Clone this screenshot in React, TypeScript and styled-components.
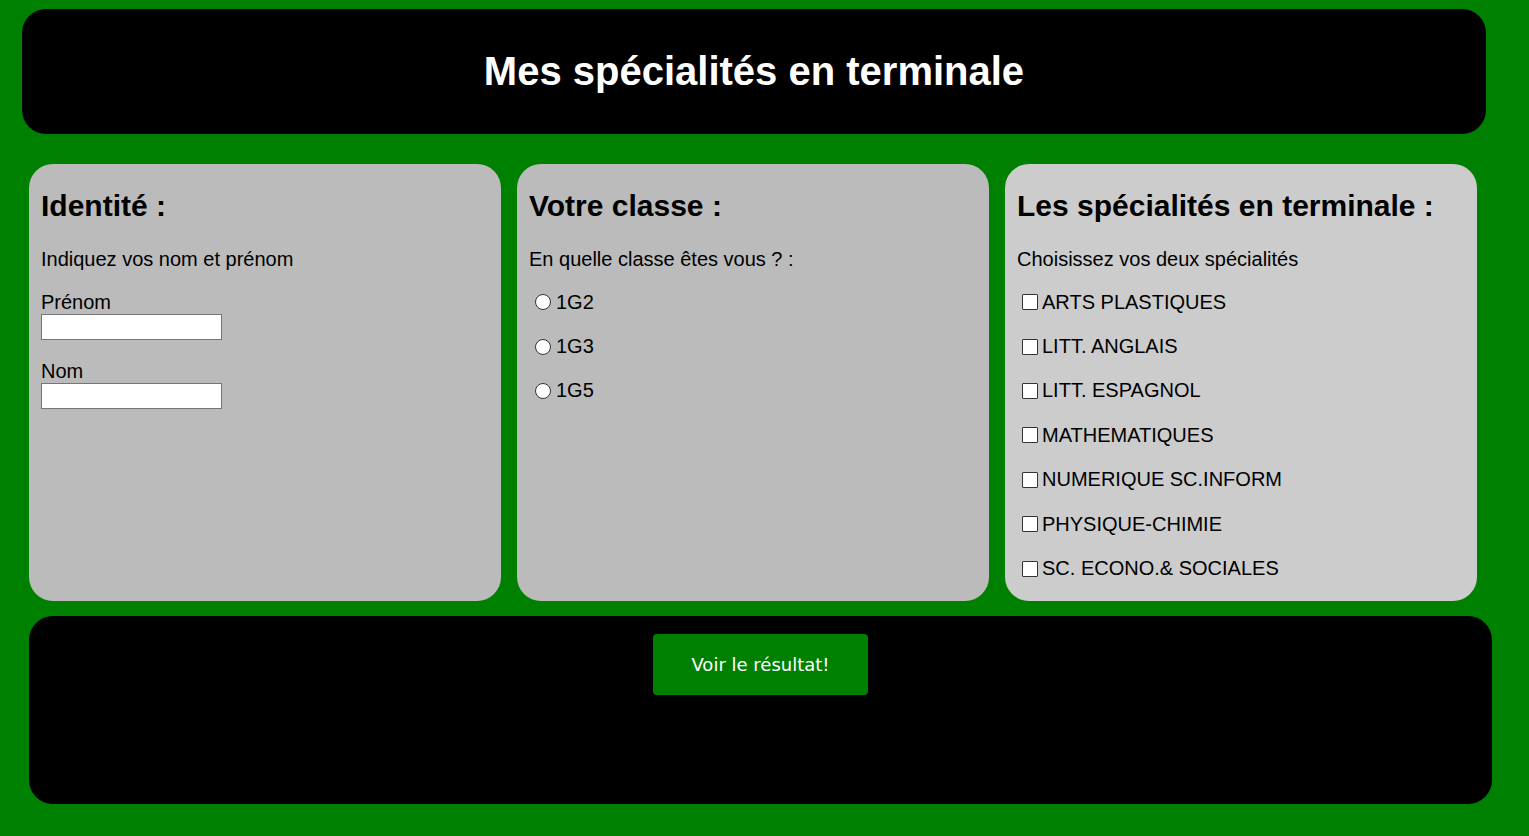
import React from "react";
import styled, { createGlobalStyle } from "styled-components";

const Global = createGlobalStyle`
  html, body { margin: 0; padding: 0; }
  body {
    background: #008000;
    font-family: "Liberation Sans", Arial, sans-serif;
    color: #000;
    width: 1529px;
    height: 836px;
    overflow: hidden;
  }
`;

const Page = styled.div`
  display: flex;
  flex-direction: column;
  padding-top: 9px;
`;

const Header = styled.header`
  margin: 0 43px 0 22px;
  height: 125px;
  background: #000;
  border-radius: 24px;
  display: flex;
  align-items: center;
  justify-content: center;
`;

const Title = styled.h1`
  margin: 0;
  color: #fff;
  font-size: 40px;
  font-weight: bold;
`;

const Row = styled.div`
  display: flex;
  gap: 16px;
  margin: 30px 0 0 29px;
`;

const Panel = styled.section<{ $light?: boolean }>`
  width: 472px;
  height: 437px;
  box-sizing: border-box;
  padding: 12px 12px;
  background: ${(p) => (p.$light ? "#cccccc" : "#bbbbbb")};
  border-radius: 24px;
  display: flex;
  flex-direction: column;
`;

const PanelTitle = styled.h2`
  margin: 14px 0 0;
  font-size: 30px;
  line-height: 32px;
  font-weight: bold;
`;

const Intro = styled.p`
  margin: 26px 0 0;
  font-size: 20px;
  line-height: 23px;
`;

const Field = styled.label`
  display: flex;
  flex-direction: column;
  align-items: flex-start;
  font-size: 20px;
  line-height: 23px;
  margin-top: 20px;
`;

const TextInput = styled.input`
  width: 181px;
  height: 26px;
  box-sizing: border-box;
  margin: 0;
  border: 1px solid #767676;
  background: #fff;
  padding: 1px 2px;
`;

const Options = styled.div`
  display: flex;
  flex-direction: column;
  margin-top: 9px;
`;

const Option = styled.label`
  display: flex;
  align-items: center;
  height: 44.4px;
  font-size: 20px;
  line-height: 23px;
`;

const Radio = styled.input`
  appearance: none;
  -webkit-appearance: none;
  box-sizing: border-box;
  width: 16px;
  height: 16px;
  margin: 0 5px 0 6px;
  border: 1px solid #333;
  border-radius: 50%;
  background: #fff;
`;

const Check = styled.input`
  appearance: none;
  -webkit-appearance: none;
  box-sizing: border-box;
  width: 16px;
  height: 16px;
  margin: 0 4px 0 5px;
  border: 1px solid #333;
  border-radius: 1px;
  background: #fff;
`;

const Footer = styled.footer`
  margin: 15px 37px 0 29px;
  height: 188px;
  background: #000;
  border-radius: 24px;
  display: flex;
  justify-content: center;
  align-items: flex-start;
  padding-top: 18px;
  box-sizing: border-box;
`;

const Button = styled.button`
  width: 215px;
  height: 61px;
  background: #008000;
  color: #fff;
  border: none;
  border-radius: 4px;
  font-family: "DejaVu Sans", Verdana, sans-serif;
  font-size: 18px;
  cursor: pointer;
`;

const classes = ["1G2", "1G3", "1G5"];
const specs = [
  "ARTS PLASTIQUES",
  "LITT. ANGLAIS",
  "LITT. ESPAGNOL",
  "MATHEMATIQUES",
  "NUMERIQUE SC.INFORM",
  "PHYSIQUE-CHIMIE",
  "SC. ECONO.& SOCIALES",
];

export default function App() {
  return (
    <>
      <Global />
      <Page>
        <Header>
          <Title>Mes spécialités en terminale</Title>
        </Header>
        <Row>
          <Panel>
            <PanelTitle>Identité :</PanelTitle>
            <Intro>Indiquez vos nom et prénom</Intro>
            <Field>
              Prénom
              <TextInput type="text" />
            </Field>
            <Field>
              Nom
              <TextInput type="text" />
            </Field>
          </Panel>
          <Panel>
            <PanelTitle>Votre classe :</PanelTitle>
            <Intro>En quelle classe êtes vous ? :</Intro>
            <Options>
              {classes.map((c) => (
                <Option key={c}>
                  <Radio type="radio" name="classe" />
                  {c}
                </Option>
              ))}
            </Options>
          </Panel>
          <Panel $light>
            <PanelTitle>Les spécialités en terminale :</PanelTitle>
            <Intro>Choisissez vos deux spécialités</Intro>
            <Options>
              {specs.map((s) => (
                <Option key={s}>
                  <Check type="checkbox" />
                  {s}
                </Option>
              ))}
            </Options>
          </Panel>
        </Row>
        <Footer>
          <Button>Voir le résultat!</Button>
        </Footer>
      </Page>
    </>
  );
}
